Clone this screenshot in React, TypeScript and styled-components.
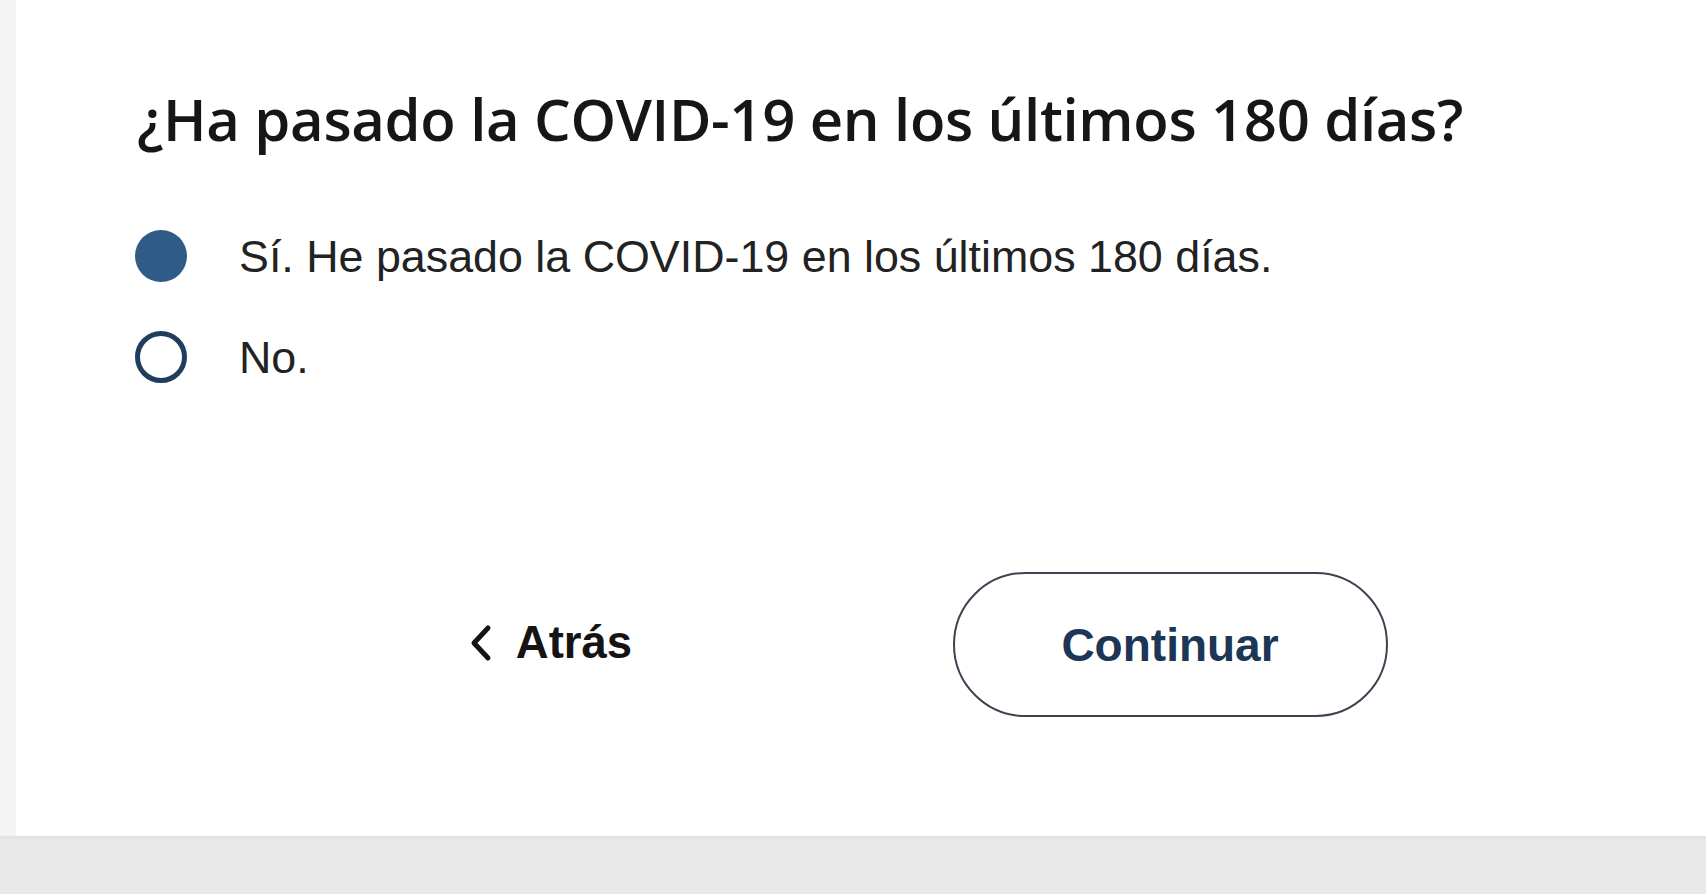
import React, { useState } from "react";
import styled, { createGlobalStyle } from "styled-components";

const Global = createGlobalStyle`
  html, body { margin: 0; padding: 0; background: #ffffff; }
  #root { height: 100vh; }
`;

const Page = styled.div`
  display: flex;
  flex-direction: column;
  height: 100vh;
  overflow: hidden;
`;

const Body = styled.div`
  flex: 1;
  display: flex;
  min-height: 0;
`;

const SideStrip = styled.div`
  width: 16px;
  flex: none;
  background: #f4f4f4;
`;

const Content = styled.main`
  flex: 1;
  padding: 84px 0 0 121px;
  background: #ffffff;
`;

const Heading = styled.h1`
  margin: 0;
  font-family: "Open Sans", "Noto Sans", sans-serif;
  font-weight: 600;
  font-size: 58px;
  line-height: 70px;
  color: #161616;
  letter-spacing: -0.34px;
`;

const OptionList = styled.div`
  display: flex;
  flex-direction: column;
  gap: 49px;
  margin: 76px 0 0 -2px;
`;

const OptionRow = styled.label`
  display: flex;
  align-items: center;
  gap: 52px;
  height: 52px;
  cursor: pointer;
`;

const Radio = styled.span<{ $checked: boolean }>`
  width: 52px;
  height: 52px;
  flex: none;
  box-sizing: border-box;
  border-radius: 50%;
  border: ${(p) => (p.$checked ? "none" : "5px solid #1f3d5d")};
  background: ${(p) => (p.$checked ? "#2f5b89" : "#ffffff")};
`;

const OptionText = styled.span`
  font-family: "Liberation Sans", Arial, sans-serif;
  font-size: 44.8px;
  line-height: 52px;
  color: #222222;
`;

const Actions = styled.div`
  display: grid;
  grid-template-columns: 620px 620px;
  justify-items: center;
  align-items: center;
  margin: 189px 0 0 103px;
`;

const BackLink = styled.a`
  display: flex;
  align-items: center;
  gap: 24px;
  font-family: "Liberation Sans", Arial, sans-serif;
  font-weight: 700;
  font-size: 45.5px;
  color: #141414;
  text-decoration: none;
  cursor: pointer;
  margin-top: -4px;
`;

const ContinueButton = styled.button`
  width: 435px;
  height: 145px;
  box-sizing: border-box;
  border: 2px solid #3b4550;
  border-radius: 73px;
  background: #ffffff;
  font-family: "Liberation Sans", Arial, sans-serif;
  font-weight: 700;
  font-size: 46px;
  color: #1c3656;
  cursor: pointer;
  padding: 0;
`;

const Footer = styled.footer`
  height: 58px;
  flex: none;
  background: #e9e9e9;
  border-top: 3px solid #e2e2e2;
  box-sizing: border-box;
`;

const options = [
  { id: "si", label: "Sí. He pasado la COVID-19 en los últimos 180 días." },
  { id: "no", label: "No." },
];

export default function App() {
  const [value, setValue] = useState("si");
  return (
    <Page>
      <Global />
      <Body>
        <SideStrip />
        <Content>
          <Heading>¿Ha pasado la COVID-19 en los últimos 180 días?</Heading>
          <OptionList>
            {options.map((o) => (
              <OptionRow key={o.id} onClick={() => setValue(o.id)}>
                <Radio $checked={value === o.id} />
                <OptionText>{o.label}</OptionText>
              </OptionRow>
            ))}
          </OptionList>
          <Actions>
            <BackLink>
              <svg width="24" height="38" viewBox="0 0 24 38" fill="none">
                <polyline
                  points="20,4 6,19 20,34"
                  stroke="#141414"
                  strokeWidth="5"
                  strokeLinecap="round"
                  strokeLinejoin="round"
                />
              </svg>
              Atrás
            </BackLink>
            <ContinueButton>Continuar</ContinueButton>
          </Actions>
        </Content>
      </Body>
      <Footer />
    </Page>
  );
}
